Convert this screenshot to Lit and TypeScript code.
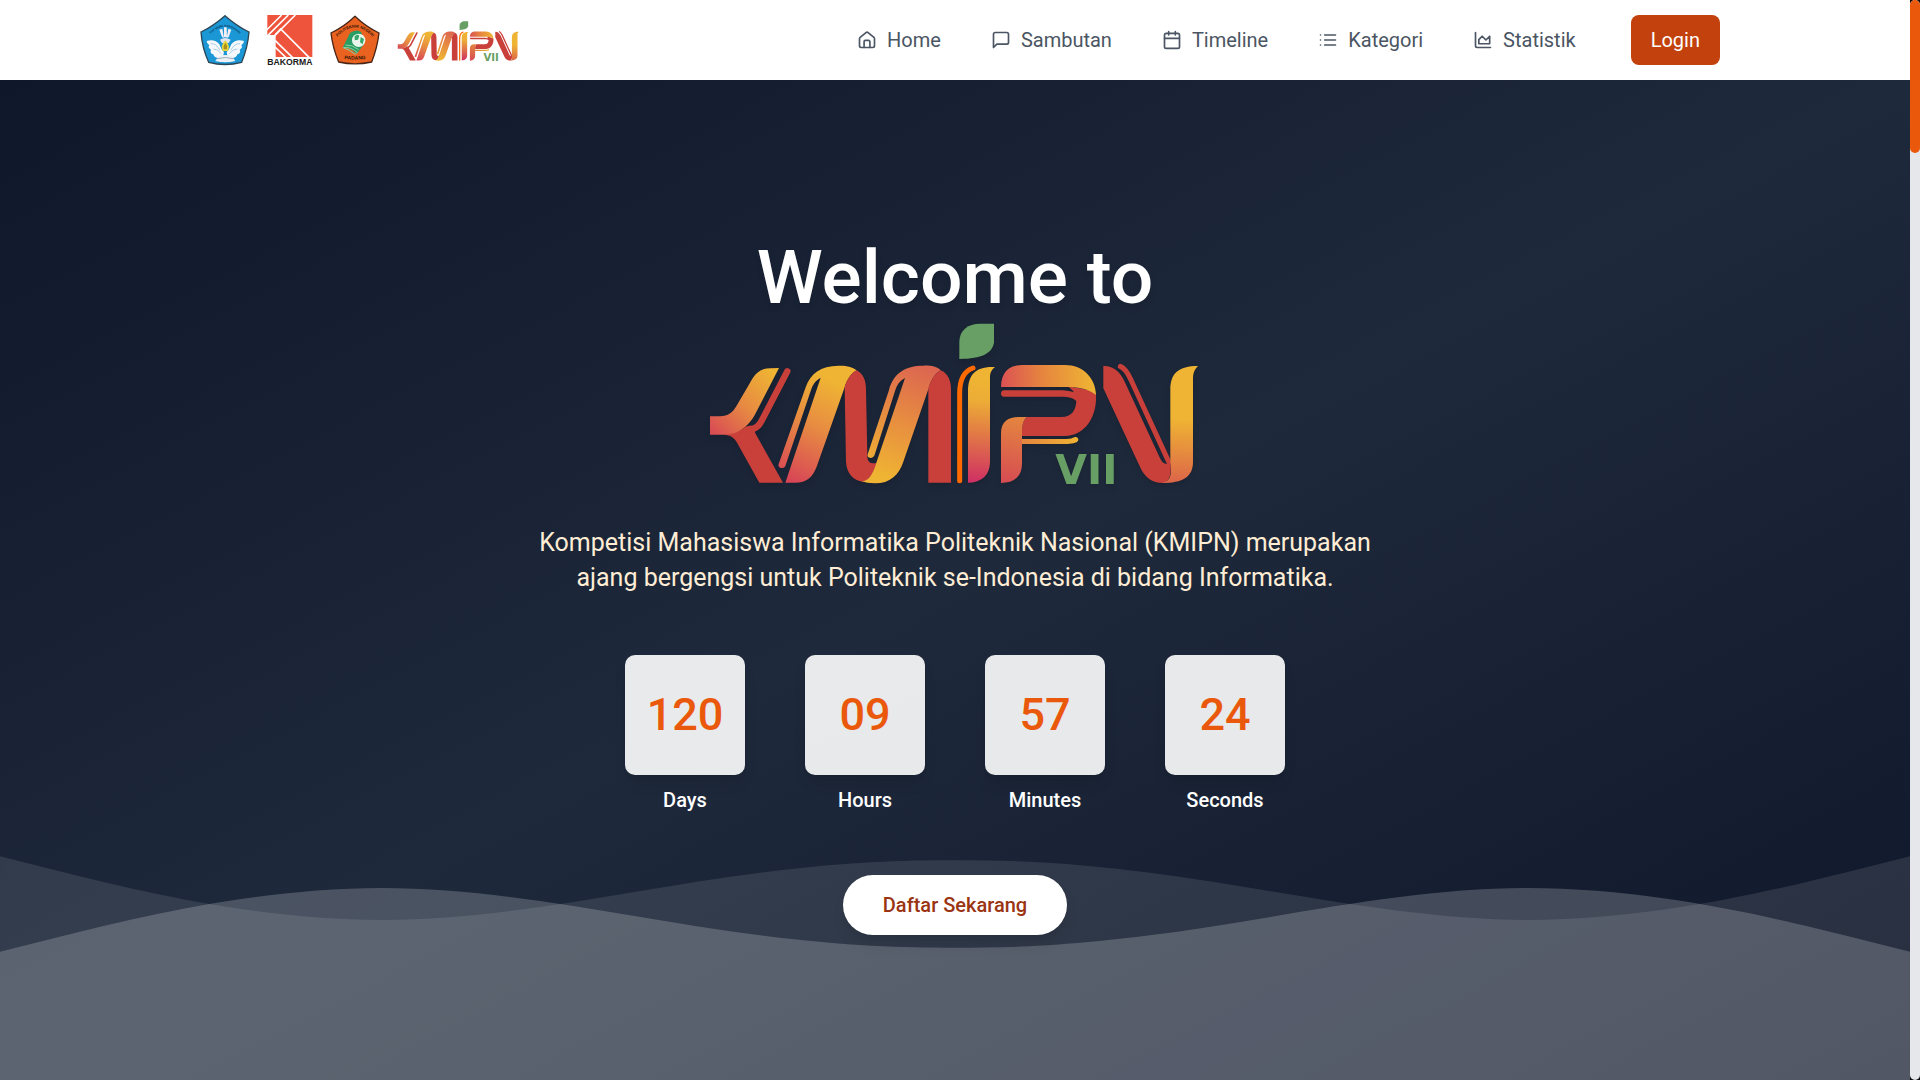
import { LitElement, html, css, svg } from "lit";
import { customElement } from "lit/decorators.js";

/** Ribbon-style KMIPN wordmark; scales with the width of its host. */
@customElement("kmipn-logo")
export class KmipnLogo extends LitElement {
  static styles = css`
    :host {
      display: block;
    }
    .mark {
      display: block;
      width: 100%;
      height: auto;
      overflow: visible;
    }
    .red {
      fill: #c9403a;
    }
    .line {
      fill: none;
      stroke: #c9403a;
      stroke-linecap: round;
    }
    .edition {
      font: 700 123px "DejaVu Sans", sans-serif;
      fill: #689f65;
    }
  `;

  render() {
    return html`
      <svg class="mark" viewBox="9 15 1512 510" role="img" aria-label="KMIPN VII">
        <defs>
          <linearGradient id="arm" gradientUnits="userSpaceOnUse" x1="220" y1="190" x2="40" y2="370">
            <stop offset="0" stop-color="#efb433" />
            <stop offset="0.5" stop-color="#e78b42" />
            <stop offset="1" stop-color="#d94c54" />
          </linearGradient>
          <linearGradient id="m1" gradientUnits="userSpaceOnUse" x1="410" y1="220" x2="270" y2="510">
            <stop offset="0" stop-color="#efb433" />
            <stop offset="0.45" stop-color="#e78b42" />
            <stop offset="1" stop-color="#d84656" />
          </linearGradient>
          <linearGradient id="m2" gradientUnits="userSpaceOnUse" x1="670" y1="170" x2="550" y2="500">
            <stop offset="0" stop-color="#dc6650" />
            <stop offset="0.5" stop-color="#e78d40" />
            <stop offset="1" stop-color="#efb433" />
          </linearGradient>
          <linearGradient id="stem" gradientUnits="userSpaceOnUse" x1="850" y1="170" x2="825" y2="518">
            <stop offset="0.1" stop-color="#efb433" />
            <stop offset="0.3" stop-color="#ecac36" />
            <stop offset="0.6" stop-color="#e17647" />
            <stop offset="1" stop-color="#cf2f63" />
          </linearGradient>
          <linearGradient id="bowl" gradientUnits="userSpaceOnUse" x1="903" y1="220" x2="1180" y2="200">
            <stop offset="0" stop-color="#db5154" />
            <stop offset="0.45" stop-color="#e6853f" />
            <stop offset="1" stop-color="#efb433" />
          </linearGradient>
          <linearGradient id="leg" gradientUnits="userSpaceOnUse" x1="960" y1="325" x2="915" y2="519">
            <stop offset="0" stop-color="#e4853f" />
            <stop offset="1" stop-color="#d64b53" />
          </linearGradient>
          <linearGradient id="bar" gradientUnits="userSpaceOnUse" x1="966" y1="395" x2="1135" y2="395">
            <stop offset="0" stop-color="#e4853f" />
            <stop offset="1" stop-color="#efb433" />
          </linearGradient>
          <linearGradient id="post" gradientUnits="userSpaceOnUse" x1="1450" y1="170" x2="1430" y2="519">
            <stop offset="0.45" stop-color="#efb433" />
            <stop offset="1" stop-color="#dc6549" />
          </linearGradient>
        </defs>
        <path class="red" d="M70 374C100 372 125 362 138 349C145 354 160 355 170 342L165 368L249 518H178L112 400C103 382 92 375 70 374Z" />
        <path class="line" stroke-width="19" d="M262 184L185 332C176 350 165 358 148 357" />
        <path fill="url(#arm)" d="M30 319H60C85 317 97 308 108 290L148 222C165 190 180 176 210 175L237 174L172 300C158 328 148 341 132 353C112 368 95 374 70 374H30Z" />
        <path fill="url(#m1)" d="M236 462L317 232C331 190 362 168 415 167C440 166 460 172 470 181C450 192 440 212 434 232L350 470C338 500 322 518 285 518H256L362 203C346 212 338 224 333 240L256 468C252 478 232 476 236 462Z" />
        <path class="red" d="M470 181C490 192 498 210 498 240L502 440C503 456 512 462 529 459C524 480 515 510 488 515C460 512 440 490 438 455L434 232C440 212 450 192 470 181Z" />
        <path fill="url(#m2)" d="M503 433L567 240C580 190 615 167 670 167C690 166 712 170 722 181C703 192 692 212 686 235L610 455C597 495 570 520 525 520C508 520 495 518 486 514C512 512 522 480 529 458L615 204C600 212 590 225 586 240L524 434C519 448 499 446 503 433Z" />
        <path class="red" d="M722 181C743 190 753 210 753 240V518H685V235C692 212 703 192 722 181Z" />
        <path fill="none" stroke="#ff6a00" stroke-width="15" stroke-linecap="round" d="M779 512V250C779 205 795 182 819 174" />
        <path fill="url(#stem)" d="M804 518V245C804 195 825 168 885 171C872 182 870 190 870 205V455C870 495 845 518 804 518Z" />
        <path fill="#689f65" d="M778 147V95C778 60 805 41 840 41H882V97C878 130 845 147 778 147Z" />
        <path class="red" d="M912 241H1085C1100 241 1112 244 1122 247C1118 240 1112 236 1106 231C1145 233 1175 242 1188 253C1192 320 1155 378 1095 378H966V370C966 345 970 330 980 321H1085C1115 321 1128 300 1129 273C1120 263 1105 260 1085 260H912C900 260 900 241 912 241Z" />
        <path fill="url(#bowl)" d="M903 231C903 190 925 165 965 165H1095C1150 165 1187 205 1188 255C1170 240 1145 233 1110 231Z" />
        <path fill="url(#leg)" d="M903 519V370C903 335 925 321 955 321H980C970 330 966 345 966 372V460C966 498 945 519 903 519Z" />
        <path fill="url(#bar)" d="M966 387H1088C1104 387 1112 386 1119 383C1130 377 1139 386 1133 394C1124 402 1108 402 1090 402H966Z" />
        <text class="edition" x="1066" y="521">VII</text>
        <path class="red" d="M1210 168C1245 168 1262 190 1274 215L1378 440C1385 455 1390 462 1402 461L1412 455V485C1410 505 1400 517 1390 519C1355 519 1335 502 1322 475L1210 235Z" />
        <path class="line" stroke-width="15" d="M1261 169C1278 176 1286 195 1293 210L1406 455" />
        <path fill="url(#post)" d="M1411 450V240C1411 190 1435 168 1494 168C1482 180 1479 190 1479 210V455C1479 500 1450 519 1385 519C1403 517 1413 505 1413 480Z" />
      </svg>
    `;
  }
}

/** Crests of the ministry, the student forum and the host polytechnic. */
@customElement("partner-logos")
export class PartnerLogos extends LitElement {
  static styles = css`
    :host {
      display: flex;
      align-items: center;
      gap: 16px;
    }
    .crest,
    .forum {
      display: block;
      width: 50px;
      height: 50px;
      overflow: visible;
    }
    .forum {
      width: 48px;
    }
    .motto {
      font: 700 9px "Liberation Sans", sans-serif;
      fill: #0e3a5c;
      text-anchor: middle;
    }
    .ring,
    .city {
      font: 700 12px "Liberation Sans", sans-serif;
      fill: #2b1206;
      text-anchor: middle;
    }
    .city {
      font-size: 15px;
    }
    .forum-name {
      font: 700 26px "Liberation Sans", sans-serif;
      fill: #1a1a1a;
    }
  `;

  render() {
    return html`
      <svg class="crest" viewBox="0 0 150 150" role="img" aria-label="Tut Wuri Handayani">
        <defs><path id="motto-arc" d="M22 68Q75 2 128 68" /></defs>
        <path d="M75 2Q110 33 147 51Q143 98 125 142Q75 155 26 142Q6 98 3 51Q40 33 75 2Z" fill="#1b97d5" stroke="#2c4654" stroke-width="4" />
        <text class="motto"><textPath href="#motto-arc" startOffset="50%">TUT WURI HANDAYANI</textPath></text>
        <path d="M72 37h8l1 30h-9zM58 44l9-3 5 28-6-3zM94 44l-9-3-5 28 6-3z" fill="#f3eef6" />
        <path d="M60 74Q76 64 92 74L86 84H66Z" fill="#dfe3ef" />
        <path d="M20 78Q44 70 58 88Q64 104 72 112L68 128Q42 132 40 118Q28 114 33 104Q22 98 28 91Q20 86 20 78Z" fill="#f6f8fb" />
        <path d="M132 78Q108 70 94 88Q88 104 80 112L84 128Q110 132 112 118Q124 114 119 104Q130 98 124 91Q132 86 132 78Z" fill="#f6f8fb" />
        <path d="M32 86Q48 84 60 106M40 102Q52 101 64 116M120 86Q104 84 92 106M112 102Q100 101 88 116" fill="none" stroke="#a8cfe6" stroke-width="3" />
        <path d="M56 124Q76 116 96 124L106 138Q76 146 46 138Z" fill="#edf1f6" />
        <path d="M52 131Q76 124 100 131" fill="none" stroke="#6e8796" stroke-width="2" />
        <path d="M76 76Q92 92 84 108H68Q60 92 76 76Z" fill="#e9d43b" />
        <path d="M76 84Q84 94 80 103H72Q68 94 76 84Z" fill="#a98e1d" />
      </svg>
      <svg class="forum" viewBox="0 0 144 150" role="img" aria-label="Bakorma">
        <path d="M4 0H139V126H29V60H4Z" fill="#ee533c" />
        <path d="M2 45L47 0M2 65L67 0M2 86L88 0" fill="none" stroke="#fff" stroke-width="5" />
        <path d="M0 86L26 60V130H0Z" fill="#fff" />
        <path d="M27 60L44 42L130 128M27 76L80 128M27 96L60 128" fill="none" stroke="#fff" stroke-width="5" />
        <text class="forum-name" x="4" y="149">BAKORMA</text>
      </svg>
      <svg class="crest" viewBox="0 0 150 150" role="img" aria-label="Politeknik Negeri Padang">
        <defs>
          <path id="ring-top" d="M19 69Q75 6 131 69" />
          <path id="ring-bottom" d="M24 128Q75 140 126 128" />
        </defs>
        <path d="M75 4Q108 36 147 54Q142 98 125 141Q75 152 26 141Q8 98 3 54Q42 36 75 4Z" fill="#ea6220" stroke="#492517" stroke-width="4" />
        <text class="ring"><textPath href="#ring-top" startOffset="50%">POLITEKNIK NEGERI</textPath></text>
        <text class="city"><textPath href="#ring-bottom" startOffset="50%">PADANG</textPath></text>
        <path d="M60 54Q80 40 94 52L102 88L80 116Q58 96 38 98Z" fill="#299d63" />
        <path d="M40 98Q60 94 82 112L76 118Q58 104 40 98ZM46 90Q66 88 86 104" fill="none" stroke="#8fd0a2" stroke-width="3" />
        <circle cx="86" cy="76" r="20" fill="#eaf6ec" />
        <path d="M74 64Q82 56 88 62L84 74L74 76ZM92 66L102 72L98 88L90 82Z" fill="#35a66c" />
      </svg>
      <slot></slot>
    `;
  }
}

const navItems = [
  {
    label: "Home",
    icon: svg`<path d="M3 10.5a2 2 0 0 1 .8-1.6l7-5.8a2 2 0 0 1 2.5 0l7 5.8a2 2 0 0 1 .7 1.6V19a2 2 0 0 1-2 2H5a2 2 0 0 1-2-2z"/><path d="M8.5 21v-7a1.5 1.5 0 0 1 1.5-1.5h4a1.5 1.5 0 0 1 1.5 1.5v7"/>`,
  },
  {
    label: "Sambutan",
    icon: svg`<path d="M21 15a2 2 0 0 1-2 2H7l-4 4V5a2 2 0 0 1 2-2h14a2 2 0 0 1 2 2z"/>`,
  },
  {
    label: "Timeline",
    icon: svg`<rect x="3" y="4" width="18" height="18" rx="2"/><path d="M8 2v4M16 2v4M3 10h18"/>`,
  },
  {
    label: "Kategori",
    icon: svg`<path d="M8 6h13M8 12h13M8 18h13M3 6h.01M3 12h.01M3 18h.01"/>`,
  },
  {
    label: "Statistik",
    icon: svg`<path d="M3 3v16a2 2 0 0 0 2 2h16"/><path d="M7 16.5v-5l4-4 4.5 4.5L20 7.5v9z"/>`,
  },
];

const countdown = [
  { value: "120", label: "Days" },
  { value: "09", label: "Hours" },
  { value: "57", label: "Minutes" },
  { value: "24", label: "Seconds" },
];

@customElement("app-root")
export class AppRoot extends LitElement {
  static styles = css`
    :host {
      display: flex;
      min-height: 100vh;
      background: #0a0a0a;
      color: #fff;
      font: 400 20px/30px Roboto, sans-serif;
    }
    *,
    *::before {
      box-sizing: border-box;
    }
    .page {
      flex: 1;
      display: flex;
      flex-direction: column;
      min-width: 0;
    }
    .topbar {
      background: #fff;
    }
    .topbar-inner {
      display: flex;
      align-items: center;
      justify-content: space-between;
      max-width: 1530px;
      min-height: 80px;
      margin: 0 auto;
      padding-left: 10px;
    }
    .brand {
      width: 125px;
    }
    .menu {
      display: flex;
      align-items: center;
      gap: 55px;
    }
    .links {
      display: flex;
      gap: 50px;
      margin: 0;
      padding: 0;
      list-style: none;
    }
    .link {
      display: flex;
      align-items: center;
      gap: 10px;
      color: #4b5563;
      text-decoration: none;
    }
    .icon {
      width: 20px;
      height: 20px;
      fill: none;
      stroke: currentColor;
      stroke-width: 2;
      stroke-linecap: round;
      stroke-linejoin: round;
    }
    .login {
      padding: 10px 20px;
      border: 0;
      border-radius: 8px;
      background: #c2410c;
      color: #fff;
      font: inherit;
    }
    .hero {
      position: relative;
      flex: 1;
      padding: 160px 40px 145px;
      background: linear-gradient(to bottom right, #0f172a, #1e293b, #0f172a);
    }
    .waves {
      position: absolute;
      left: 0;
      bottom: 0;
      width: 100%;
      height: auto;
      fill: #fff;
    }
    .content {
      position: relative;
      display: flex;
      flex-direction: column;
      align-items: center;
      text-align: center;
    }
    .title {
      margin: 0;
      font-size: 75px;
      line-height: 75px;
      font-weight: 500;
      filter: drop-shadow(0 4px 3px rgb(0 0 0 / 0.07)) drop-shadow(0 2px 2px rgb(0 0 0 / 0.06));
    }
    .wordmark {
      width: 504px;
      max-width: 100%;
      filter: drop-shadow(0 4px 3px rgb(0 0 0 / 0.07)) drop-shadow(0 2px 2px rgb(0 0 0 / 0.06));
    }
    .lead {
      max-width: 840px;
      margin: 40px 0 60px;
      color: #ffedd5;
      font-size: 25px;
      line-height: 35px;
    }
    .countdown {
      display: flex;
      flex-wrap: wrap;
      justify-content: center;
      gap: 60px;
      margin-bottom: 60px;
    }
    .unit {
      display: flex;
      flex-direction: column;
      gap: 10px;
      font-weight: 500;
    }
    .value {
      display: grid;
      place-items: center;
      width: 120px;
      height: 120px;
      border-radius: 10px;
      background: rgb(255 255 255 / 0.9);
      box-shadow: 0 10px 15px -3px rgb(0 0 0 / 0.1), 0 4px 6px -4px rgb(0 0 0 / 0.1);
      color: #ea580c;
      font-size: 45px;
      line-height: 50px;
    }
    .cta {
      padding: 15px 40px;
      border: 0;
      border-radius: 30px;
      background: #fff;
      box-shadow: 0 10px 15px -3px rgb(0 0 0 / 0.1), 0 4px 6px -4px rgb(0 0 0 / 0.1);
      color: #9a3412;
      font: inherit;
      font-weight: 500;
    }
    .rail {
      width: 10px;
      border-radius: 5px;
      background: #e5e7eb;
    }
    .thumb {
      height: 153px;
      border-radius: 5px;
      background: #ea580c;
    }
  `;

  render() {
    return html`
      <div class="page">
        <header class="topbar">
          <div class="topbar-inner">
            <partner-logos><kmipn-logo class="brand"></kmipn-logo></partner-logos>
            <nav class="menu">
              <ul class="links">
                ${navItems.map(
                  (item) => html`
                    <li>
                      <a class="link" href="#${item.label.toLowerCase()}">
                        <svg class="icon" viewBox="0 0 24 24" aria-hidden="true">${item.icon}</svg>
                        ${item.label}
                      </a>
                    </li>
                  `
                )}
              </ul>
              <button class="login" type="button">Login</button>
            </nav>
          </div>
        </header>
        <main class="hero">
          <svg class="waves" viewBox="0 0 1440 320" aria-hidden="true">
            <path
              fill-opacity="0.1"
              d="M0 151L48 163C96 175 192 199 288 199C384 199 480 175 576 163C640 155 680 154 720 154C760 154 800 155 864 163C960 175 1056 199 1152 199C1248 199 1344 175 1392 163L1440 151V320H0Z"
            />
            <path
              fill-opacity="0.2"
              d="M0 223L48 211C96 199 192 175 288 175C384 175 480 199 576 211C640 219 680 220 720 220C760 220 800 219 864 211C960 199 1056 175 1152 175C1248 175 1344 199 1392 211L1440 223V320H0Z"
            />
          </svg>
          <div class="content">
            <h1 class="title">Welcome to</h1>
            <kmipn-logo class="wordmark"></kmipn-logo>
            <p class="lead">
              Kompetisi Mahasiswa Informatika Politeknik Nasional (KMIPN) merupakan ajang bergengsi untuk
              Politeknik se-Indonesia di bidang Informatika.
            </p>
            <div class="countdown" role="timer">
              ${countdown.map(
                (unit) => html`
                  <div class="unit">
                    <span class="value">${unit.value}</span>
                    <span>${unit.label}</span>
                  </div>
                `
              )}
            </div>
            <button class="cta" type="button">Daftar Sekarang</button>
          </div>
        </main>
      </div>
      <div class="rail" aria-hidden="true"><div class="thumb"></div></div>
    `;
  }
}
